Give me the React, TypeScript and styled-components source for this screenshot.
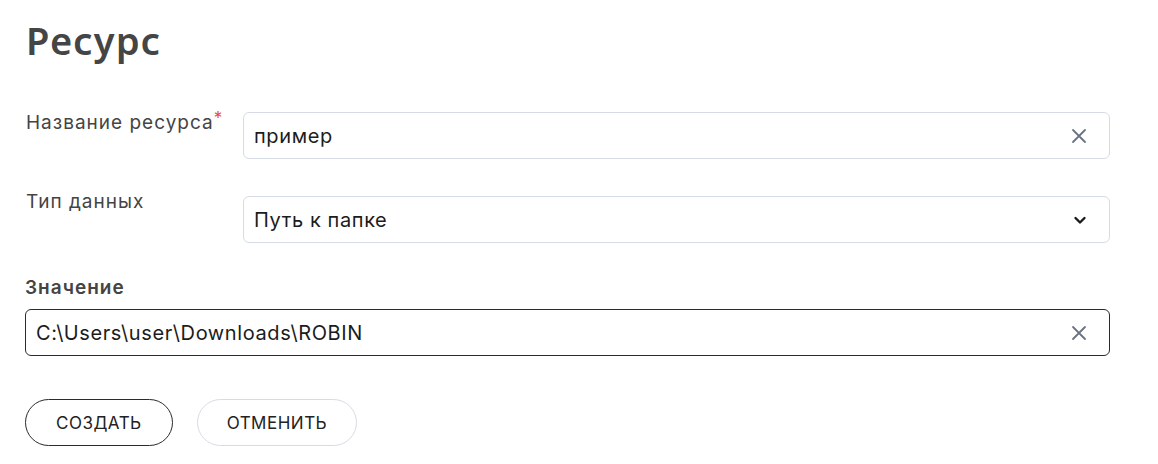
import styled, { createGlobalStyle } from 'styled-components';

const Global = createGlobalStyle`
  body {
    margin: 0;
    background: #fff;
    font-family: Inter, 'Noto Sans', sans-serif;
  }
`;

const Page = styled.div`
  padding: 14px 48px 0 25px;
`;

const Title = styled.h1`
  margin: 0 0 0 1px;
  font: 600 38px 'Noto Sans', Inter, sans-serif;
  color: #454545;
  line-height: 52px;
  letter-spacing: 1.2px;
`;

const Row = styled.div<{ $top: number }>`
  display: flex;
  align-items: flex-start;
  margin-top: ${p => p.$top}px;
`;

const Label = styled.div`
  width: 218px;
  flex-shrink: 0;
  box-sizing: border-box;
  padding-left: 1px;
  margin-top: -4px;
  font-size: 19px;
  line-height: 20px;
  letter-spacing: 1px;
  color: #444;
`;

const Star = styled.span`
  color: #e5484d;
  vertical-align: 5px;
  font-size: 17px;
`;

const Field = styled.div<{ $dark?: boolean }>`
  flex: 1;
  height: 47px;
  box-sizing: border-box;
  border: 1px solid ${p => (p.$dark ? '#2b2b2b' : '#d6dce6')};
  border-radius: 6px;
  display: flex;
  align-items: center;
  padding: 0 22px 0 10px;
  font-size: 20px;
  letter-spacing: 0.6px;
  color: #1c1c1c;
`;

const Value = styled.span`
  flex: 1;
`;

const Heading = styled.div`
  margin-top: 35px;
  font-size: 19px;
  font-weight: 600;
  letter-spacing: 1px;
  color: #444;
  line-height: 20px;
`;

const Buttons = styled.div`
  display: flex;
  gap: 24px;
  margin-top: 43px;
`;

const Button = styled.button<{ $primary?: boolean }>`
  height: 47px;
  box-sizing: border-box;
  padding: 0 ${p => (p.$primary ? 30 : 29)}px;
  border-radius: 24px;
  border: 1px solid ${p => (p.$primary ? '#2b2b2b' : '#d6dce6')};
  background: #fff;
  font: 400 17px Inter, 'Noto Sans', sans-serif;
  letter-spacing: 0.5px;
  color: #222;
`;

const Clear = () => (
  <svg width="16" height="16" viewBox="0 0 16 16" fill="none" stroke="#6b7280" strokeWidth="1.8" strokeLinecap="round">
    <path d="M2 2l12 12M14 2L2 14" />
  </svg>
);

const Chevron = () => (
  <svg width="14" height="14" viewBox="0 0 14 14" fill="none" stroke="#1a1a1a" strokeWidth="2.4" strokeLinecap="round" strokeLinejoin="round">
    <path d="M2.5 5l4.5 4.5L11.5 5" />
  </svg>
);

export default function App() {
  return (
    <Page>
      <Global />
      <Title>Ресурс</Title>
      <Row $top={46}>
        <Label>
          Название ресурса<Star>*</Star>
        </Label>
        <Field>
          <Value>пример</Value>
          <Clear />
        </Field>
      </Row>
      <Row $top={37}>
        <Label>Тип данных</Label>
        <Field>
          <Value>Путь к папке</Value>
          <Chevron />
        </Field>
      </Row>
      <Heading>Значение</Heading>
      <Row $top={11}>
        <Field $dark>
          <Value>C:\Users\user\Downloads\ROBIN</Value>
          <Clear />
        </Field>
      </Row>
      <Buttons>
        <Button $primary>СОЗДАТЬ</Button>
        <Button>ОТМЕНИТЬ</Button>
      </Buttons>
    </Page>
  );
}
